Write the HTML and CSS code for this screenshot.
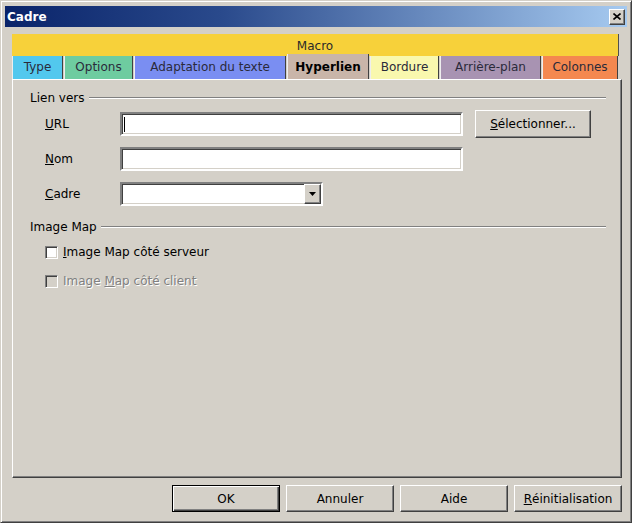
FILE: index.html
```html
<!DOCTYPE html>
<html>
    <head>
        <meta charset="utf-8">
        <title>Cadre</title>
        <link rel="stylesheet" href="styles.css">
    </head>
    <body>
        <div class="window">
            <div class="titlebar">
                <span class="title">Cadre</span>
                <span class="close">
                    <svg width="8" height="7" viewBox="0 0 8 7">
                        <path d="M0.5 0.5 L7.5 6.5 M7.5 0.5 L0.5 6.5" stroke="#000" stroke-width="1.6" fill="none"/>
                    </svg>
                </span>
            </div>
            <div class="dialog">
                <div class="tabs">
                    <div class="tab-macro">Macro</div>
                    <div class="tab-row">
                        <div class="tab tab-type">Type</div>
                        <div class="tab tab-options">Options</div>
                        <div class="tab tab-wrap">Adaptation du texte</div>
                        <div class="tab tab-link selected">Hyperlien</div>
                        <div class="tab tab-border">Bordure</div>
                        <div class="tab tab-bg">Arrière-plan</div>
                        <div class="tab tab-cols">Colonnes</div>
                    </div>
                </div>
                <div class="panel">
                    <div class="legend">Lien vers</div>
                    <div class="fields">
                        <div class="field-row">
                            <span class="field-label"><u>U</u>RL</span>
                            <div class="textbox"><span class="caret"></span></div>
                            <span class="button btn-select"><u>S</u>électionner...</span>
                        </div>
                        <div class="field-row">
                            <span class="field-label"><u>N</u>om</span>
                            <div class="textbox"></div>
                        </div>
                        <div class="field-row">
                            <span class="field-label"><u>C</u>adre</span>
                            <div class="textbox combo">
                                <span class="combo-text"></span>
                                <span class="combo-button">
                                    <svg width="7" height="4" viewBox="0 0 7 4"><path d="M0 0 H7 L3.5 4 Z" fill="#000"/></svg>
                                </span>
                            </div>
                        </div>
                    </div>
                    <div class="legend legend-map">Image Map</div>
                    <div class="checks">
                        <label class="check-row">
                            <span class="checkbox"></span>
                            <span><u>I</u>mage Map côté serveur</span>
                        </label>
                        <label class="check-row disabled">
                            <span class="checkbox"></span>
                            <span>Image <u>M</u>ap côté client</span>
                        </label>
                    </div>
                </div>
                <div class="buttons">
                    <span class="button default">OK</span>
                    <span class="button">Annuler</span>
                    <span class="button">Aide</span>
                    <span class="button"><u>R</u>éinitialisation</span>
                </div>
            </div>
        </div>
    </body>
</html>
```

FILE: styles.css
```css
body {
    margin: 0;
    font-family: "DejaVu Sans", sans-serif;
    font-size: 12px;
    color: #000;
}
.window {
    box-sizing: border-box;
    width: 632px;
    height: 523px;
    background: #d4d0c8;
    border: 1px solid;
    border-color: #d4d0c8 #404040 #404040 #d4d0c8;
    box-shadow: inset 1px 1px #fff, inset -1px -1px #808080;
    padding: 5px 4px 0 4px;
}
.titlebar {
    height: 21px;
    display: flex;
    align-items: center;
    justify-content: space-between;
    padding: 0 2px;
    background: linear-gradient(to right, #0a246a 0%, #2a4a8c 35%, #a6caf0 100%);
    color: #fff;
    font-weight: bold;
}
.close {
    box-sizing: border-box;
    width: 16px;
    height: 16px;
    display: flex;
    align-items: center;
    justify-content: center;
    background: #d4d0c8;
    border: 1px solid;
    border-color: #fff #404040 #404040 #fff;
    box-shadow: inset -1px -1px #808080;
}
.dialog {
    padding: 7px 5px 0 7px;
}

/* tabs */
.tab-macro {
    box-sizing: border-box;
    height: 22px;
    margin-right: 3px;
    background: #f7d13a;
    border-right: 1px solid #505050;
    color: #2a2a2a;
    text-align: center;
    line-height: 24px;
}
.tab-row {
    display: flex;
    height: 23px;
}
.tab {
    box-sizing: border-box;
    flex: none;
    height: 23px;
    margin-right: 1px;
    border-left: 1px solid #eeeeee;
    border-right: 1px solid #404040;
    color: #2a2a3a;
    text-align: center;
    line-height: 23px;
}
.tab-type { width: 51px; background: #52c8ee; }
.tab-options { width: 69px; background: #6ecca0; }
.tab-wrap { width: 152px; background: #7a8ef2; }
.tab-link { width: 82px; background: #c9b5a9; }
.tab-border { width: 69px; background: #f9f8ae; }
.tab-bg { width: 101px; background: #a893b2; }
.tab-cols { width: 76px; background: #f4884f; }
.tab.selected {
    height: 25px;
    margin-top: -2px;
    line-height: 27px;
    font-weight: bold;
    color: #000;
}

/* panel */
.panel {
    box-sizing: border-box;
    height: 399px;
    padding: 11px 15px 0 17px;
    border: 1px solid;
    border-color: #fff #404040 #404040 #fff;
    box-shadow: inset -1px -1px #808080;
}
.legend {
    display: flex;
    align-items: center;
    line-height: 14px;
}
.legend::after {
    content: "";
    flex: 1;
    margin-left: 4px;
    border-top: 1px solid #808080;
    border-bottom: 1px solid #fff;
}
.legend-map {
    margin-top: 12px;
}
.fields {
    display: flex;
    flex-direction: column;
    gap: 7px;
    margin-top: 5px;
    padding-left: 15px;
}
.field-row {
    display: flex;
    align-items: center;
    height: 28px;
}
.field-label {
    width: 75px;
}
.textbox {
    box-sizing: border-box;
    width: 343px;
    height: 24px;
    display: flex;
    align-items: center;
    background: #fff;
    border: 2px solid;
    border-color: #808080 #fff #fff #808080;
    box-shadow: inset 1px 1px #404040, inset -1px -1px #d4d0c8;
}
.caret {
    width: 1px;
    height: 15px;
    margin-left: 2px;
    background: #000;
}
.combo {
    width: 203px;
    justify-content: space-between;
}
.combo-button {
    box-sizing: border-box;
    width: 17px;
    height: 20px;
    display: flex;
    align-items: center;
    justify-content: center;
    background: #d4d0c8;
    border: 1px solid;
    border-color: #fff #404040 #404040 #fff;
    box-shadow: inset -1px -1px #808080;
}

/* buttons */
.button {
    box-sizing: border-box;
    width: 108px;
    height: 27px;
    display: flex;
    align-items: center;
    justify-content: center;
    border: 1px solid;
    border-color: #fff #404040 #404040 #fff;
    box-shadow: inset -1px -1px #808080;
}
.btn-select {
    width: 116px;
    height: 28px;
    margin-left: 12px;
}
.button.default {
    border-color: #000;
    box-shadow: inset 1px 1px #fff, inset -1px -1px #404040, inset -2px -2px #808080;
}
.buttons {
    display: flex;
    justify-content: flex-end;
    gap: 6px;
    margin-top: 7px;
}

/* checkboxes */
.checks {
    display: flex;
    flex-direction: column;
    gap: 13px;
    margin-top: 10px;
    padding-left: 15px;
}
.check-row {
    display: flex;
    align-items: center;
    gap: 5px;
    height: 16px;
}
.checkbox {
    box-sizing: border-box;
    width: 13px;
    height: 13px;
    background: #fff;
    border: 1px solid;
    border-color: #808080 #fff #fff #808080;
    box-shadow: inset 1px 1px #404040, inset -1px -1px #d4d0c8;
}
.disabled {
    color: #808080;
    text-shadow: 1px 1px 0 #fff;
}
.disabled .checkbox {
    background: #d4d0c8;
}
```
